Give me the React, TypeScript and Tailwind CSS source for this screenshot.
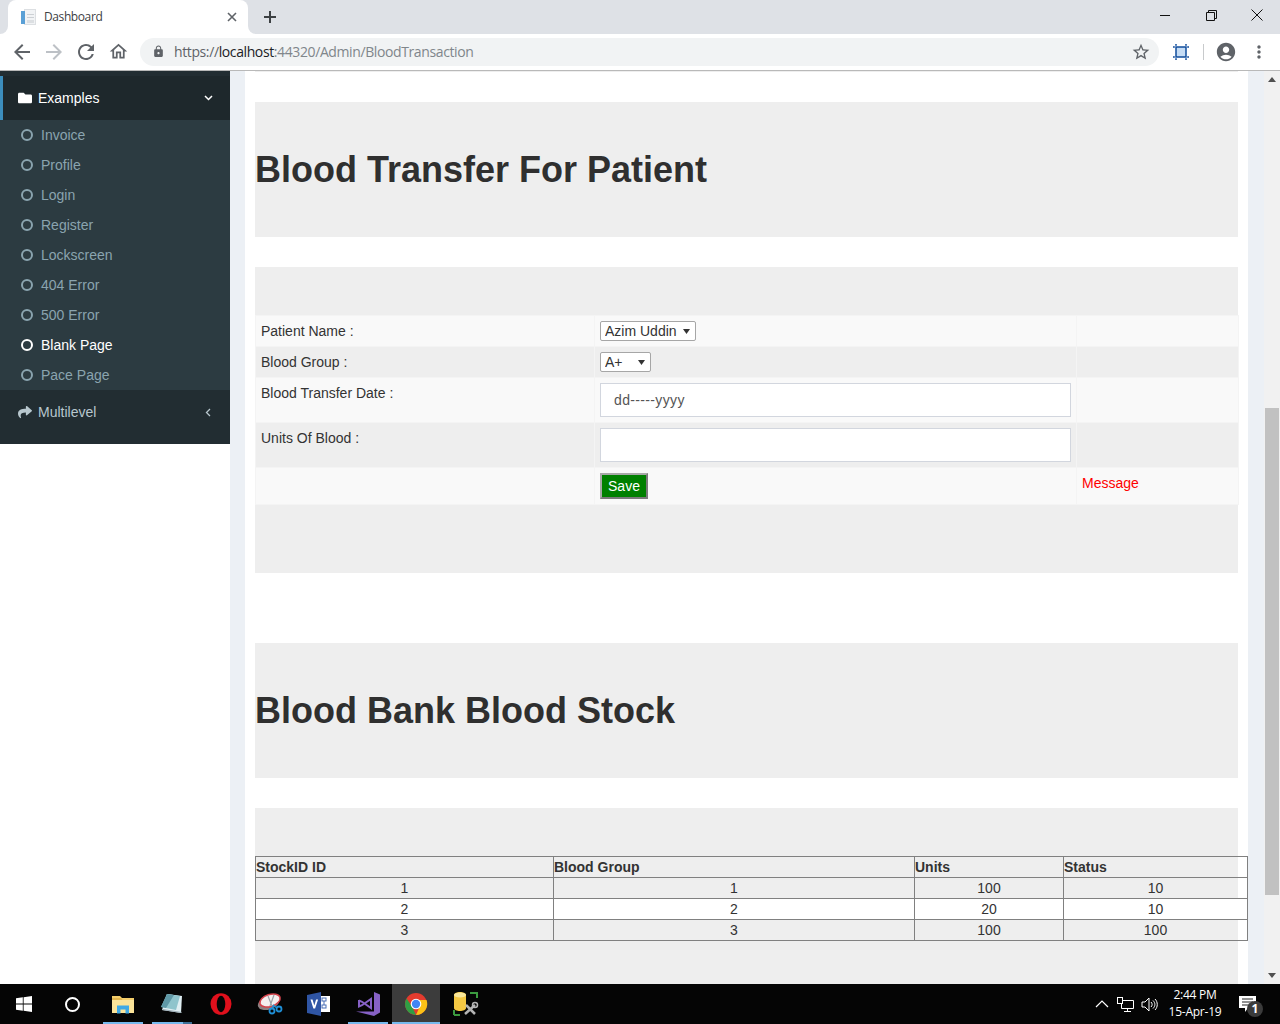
import React from "react";
import { FaFolder, FaShare } from "react-icons/fa";
import { MdArrowBack, MdArrowForward, MdRefresh, MdOutlineHome, MdLock, MdStarBorder, MdAccountCircle, MdMoreVert } from "react-icons/md";

const items = ["Invoice", "Profile", "Login", "Register", "Lockscreen", "404 Error", "500 Error", "Blank Page", "Pace Page"];

function TabIcon() {
  return (
    <svg width="16" height="18" viewBox="0 0 16 18">
      <rect x="4.500" y="1.500" width="11" height="15" fill="#f1f3f5" stroke="#dcdfe2" />
      <rect x="1" y="3" width="4" height="13" fill="#5aa0d6" />
      <rect x="7" y="6" width="7" height="1" fill="#ccd0d4" />
      <rect x="7" y="9" width="7" height="1" fill="#ccd0d4" />
      <rect x="7" y="12" width="7" height="3" fill="#dcdfe2" />
    </svg>
  );
}

function Explorer() {
  return (
    <svg width="22" height="19" viewBox="0 0 22 19">
      <path d="M0 1h8l2 2h12v15H0z" fill="#f5cf6c" />
      <rect x="0" y="5" width="22" height="13" fill="#fbe49a" />
      <path d="M0 3h9l1.500 2H0z" fill="#e3b64f" />
      <path d="M5 18.500v-8h12v8h-3.500v-4h-5v4z" fill="#3fa9e6" />
    </svg>
  );
}
function Notepad() {
  return (
    <svg width="24" height="22" viewBox="0 0 24 22">
      <path d="M7 1l15 2-1 17-19-3z" fill="#dfeef2" />
      <path d="M7 1l13 2-4 14-15-3z" fill="#8fc4cc" />
      <path d="M7 1l7 1-8 13-5-1z" fill="#5f98a6" />
      <path d="M2 17l19 3 1-1-19-3z" fill="#9fb0b8" />
    </svg>
  );
}
function Opera() {
  return (
    <svg width="22" height="22" viewBox="0 0 22 22">
      <ellipse cx="11" cy="11" rx="10.500" ry="10.800" fill="#e0101c" />
      <ellipse cx="11" cy="11" rx="4.300" ry="8.300" fill="#050505" />
    </svg>
  );
}
function Snip() {
  return (
    <svg width="26" height="24" viewBox="0 0 26 24">
      <ellipse cx="11.500" cy="11" rx="11" ry="6.500" transform="rotate(-18 11.500 11)" fill="#8c7f7f" />
      <ellipse cx="13" cy="8.500" rx="10.500" ry="6" transform="rotate(-18 13 8.500)" fill="#f5eeee" stroke="#d4414a" strokeWidth="1.500" />
      <path d="M11 4l4 10M17 3l-4 11" stroke="#9aa0a6" strokeWidth="1.200" />
      <circle cx="15" cy="19" r="2.500" fill="none" stroke="#1f8fd6" strokeWidth="1.800" />
      <circle cx="22" cy="17" r="2.500" fill="none" stroke="#1f8fd6" strokeWidth="1.800" />
      <path d="M15 16.500l1.500-3 2.500 2" stroke="#1f8fd6" strokeWidth="1.500" fill="none" />
    </svg>
  );
}
function Visio() {
  return (
    <svg width="24" height="24" viewBox="0 0 24 24">
      <rect x="12" y="4" width="11" height="16" fill="#fff" />
      <rect x="15" y="6" width="4" height="3" fill="none" stroke="#4a6fb5" />
      <rect x="15" y="13" width="4" height="3" fill="none" stroke="#4a6fb5" />
      <path d="M17 9v4" stroke="#4a6fb5" />
      <path d="M0 3l14-3v24L0 21z" fill="#2f55a4" />
      <path d="M3.500 7.500h2l1.800 6 1.800-6h2l-3 9h-1.700z" fill="#fff" />
    </svg>
  );
}
function VS() {
  return (
    <svg width="26" height="26" viewBox="0 0 26 26">
      <path d="M19 1l6 2.500v18L19 25 1 20.500h18z" fill="#8661c5" />
      <path d="M4 9v6.500l3-1.300 9-6.200v9l-9-6.200-3-1.300" fill="none" stroke="#8661c5" strokeWidth="2" />
    </svg>
  );
}
function Chrome() {
  return (
    <svg width="24" height="24" viewBox="0 0 24 24">
      <circle cx="12" cy="12" r="11" fill="#e33b2e" />
      <path d="M12 23A11 11 0 0 1 2.500 6.500L8 14.500z" fill="#2f9e44" />
      <path d="M12 23A11 11 0 0 0 22.500 8H12l3.500 7z" fill="#fbc116" />
      <circle cx="12" cy="12" r="5.300" fill="#fff" />
      <circle cx="12" cy="12" r="4.200" fill="#4285f4" />
    </svg>
  );
}
function DbTool() {
  return (
    <svg width="26" height="26" viewBox="0 0 26 26">
      <path d="M1 4c0-4 12-4 12 0v13c0 4-12 4-12 0z" fill="#f5c842" />
      <ellipse cx="7" cy="4" rx="6" ry="2.500" fill="#fbe79a" />
      <path d="M17 2h7v5M1 24v-5M1 24h6" fill="none" stroke="#3b9a3f" strokeWidth="2" />
      <path d="M12 23l10-9M13 14l9 9" stroke="#b4b4b4" strokeWidth="2.500" />
      <circle cx="22" cy="14" r="2.500" fill="none" stroke="#b4b4b4" strokeWidth="1.500" />
    </svg>
  );
}

function TaskItem({ children, line, active, split }: { children: React.ReactNode; line?: boolean; active?: boolean; split?: boolean }) {
  return (
    <div className={`relative flex h-full items-center justify-center ${active ? "w-[48px] mr-[1px] bg-[#3c3c3c]" : "w-[49px]"}`}>
      {children}
      {line && (
        <div className={`absolute bottom-0 flex h-[2px] ${active ? "left-0 right-0" : "left-[5px] w-[40px]"} bg-[#76b9ed]`}>
          {split && <div className="ml-auto h-full w-[9px] bg-[#3d6f96]" />}
        </div>
      )}
    </div>
  );
}

function Select({ label, wide }: { label: string; wide?: boolean }) {
  return (
    <div className={`relative ${wide ? "w-[96px]" : "w-[51px]"}`}>
      <select className="block h-[20px] w-full appearance-none rounded-[2px] border border-[#a6a6a6] bg-white pl-[4px] text-[14px] leading-[18px] text-[#333]">
        <option>{label}</option>
      </select>
      <svg className="absolute right-[6px] top-[8px]" width="7" height="5" viewBox="0 0 7 5"><path d="M0 0h7L3.500 5z" fill="#333" /></svg>
    </div>
  );
}

const cell = "border border-[#f4f4f4]";
const inputCls = "block h-[34px] w-[471px] border border-[#d2d6de] bg-white px-[13px] text-[14px] text-[#555]";
const sc = "border border-[#808080]";

export default function App() {
  return (
    <div className="flex h-screen w-[1280px] flex-col overflow-hidden bg-white font-['Liberation_Sans',sans-serif] text-[14px] leading-[20px] text-[#333]">
      {/* tab strip */}
      <div className="flex h-[34px] shrink-0 bg-white">
        <div className="w-2 rounded-br-lg bg-[#dee1e6]" />
        <div className="w-[240px] bg-[#dee1e6]">
          <div className="flex h-full items-center rounded-t-lg bg-white pl-[12px] pr-[11px] pb-[1px]">
            <TabIcon />
            <span className="ml-[8px] font-['Open_Sans',sans-serif] text-[12px] tracking-[-0.4px] text-[#3c4043]">Dashboard</span>
            <svg className="ml-auto" width="10" height="10" viewBox="0 0 10 10"><path d="M1 1l8 8M9 1l-8 8" stroke="#5f6368" strokeWidth="1.600" /></svg>
          </div>
        </div>
        <div className="flex flex-1 items-center rounded-bl-lg bg-[#dee1e6] pl-[16px]">
          <svg width="12" height="12" viewBox="0 0 12 12"><path d="M6 0v12M0 6h12" stroke="#3c4043" strokeWidth="2" /></svg>
          <div className="ml-auto flex h-full items-center pb-[4px]">
            <div className="flex w-[46px] justify-center"><svg width="11" height="11" viewBox="0 0 11 11"><path d="M0 5.500h10" stroke="#111" /></svg></div>
            <div className="flex w-[46px] justify-center"><svg width="11" height="11" viewBox="0 0 11 11"><path d="M.5 2.500h8v8h-8zM2.500 2.500v-2h8v8h-2" fill="none" stroke="#111" /></svg></div>
            <div className="flex w-[46px] justify-center"><svg width="12" height="12" viewBox="0 0 12 12"><path d="M.5.500l11 11M11.500.500l-11 11" stroke="#111" /></svg></div>
          </div>
        </div>
      </div>
      {/* toolbar */}
      <div className="flex h-[37px] shrink-0 items-center border-b border-[#b9b9b9] bg-white pl-[10px] pb-[1px]">
        <MdArrowBack size={24} className="text-[#5f6368]" />
        <MdArrowForward size={24} className="ml-[8px] text-[#bdc1c6]" />
        <MdRefresh size={24} className="ml-[8px] text-[#5f6368]" />
        <div className="ml-[8px] flex w-[24px] justify-center">
          <MdOutlineHome size={21} className="text-[#5f6368]" />
        </div>
        <div className="ml-[10px] flex h-[28px] w-[1019px] items-center rounded-full bg-[#f1f3f4] pl-[12px] pr-[8px]">
          <MdLock size={13} className="text-[#5f6368]" />
          <span className="ml-[9px] font-['Open_Sans',sans-serif] text-[14px] tracking-[-0.39px] text-[#80868b]">
            <span className="text-[#5f6368]">https://</span>
            <span className="text-[#202124]">localhost</span>:44320/Admin/BloodTransaction
          </span>
          <MdStarBorder size={20} className="ml-auto text-[#5f6368]" />
        </div>
        <div className="ml-[14px] flex h-[16px] w-[16px] items-center justify-center">
          <svg width="16" height="16" viewBox="0 0 16 16">
            <rect x="3" y="3" width="10" height="10" fill="#c5dcf5" />
            <path d="M0 3h16M0 13h16M3 0v16M13 0v16" stroke="#0f4c9c" strokeWidth="1.500" />
            <path d="M1.500 3h1M13.500 3h1M1.500 13h1M13.500 13h1M3 1.500v1M13 1.500v1M3 13.500v1M13 13.500v1" stroke="#fff" strokeWidth="1.500" opacity="0.6" />
          </svg>
        </div>
        <div className="ml-[14px] h-[16px] w-px bg-[#c8cacc]" />
        <MdAccountCircle size={22} className="ml-[11px] text-[#5f6368]" />
        <MdMoreVert size={20} className="ml-[12px] text-[#5f6368]" />
      </div>
      {/* page */}
      <div className="flex min-h-0 flex-1">
        <aside className="w-[230px] shrink-0 bg-white">
          <div className="bg-[#222d32] pt-[5px] pb-[10px]">
            <div className="flex h-[44px] items-center border-l-[3px] border-[#3c8dbc] bg-[#1e282c] pl-[15px] pr-[17px] text-white">
              <FaFolder size={14} />
              <span className="ml-[6px]">Examples</span>
              <svg className="ml-auto" width="9" height="6" viewBox="0 0 9 6"><path d="M1 1l3.500 3.500L8 1" fill="none" stroke="#fff" strokeWidth="1.500" /></svg>
            </div>
            <div className="bg-[#2c3b41]">
              {items.map((t) => (
                <div key={t} className={`flex h-[30px] items-center pl-[21px] ${t === "Blank Page" ? "text-white" : "text-[#8aa4af]"}`}>
                  <div className="h-[12px] w-[12px] rounded-full border-2 border-current" />
                  <span className="ml-[8px]">{t}</span>
                </div>
              ))}
            </div>
            <div className="flex h-[44px] items-center pl-[18px] pr-[19px] text-[#b8c7ce]">
              <FaShare size={14} />
              <span className="ml-[6px]">Multilevel</span>
              <svg className="ml-auto" width="6" height="9" viewBox="0 0 6 9"><path d="M5 1L1.500 4.500 5 8" fill="none" stroke="#b8c7ce" strokeWidth="1.300" /></svg>
            </div>
          </div>
        </aside>
        <main className="flex min-w-0 flex-1 overflow-hidden bg-[#ecf0f5] pl-[15px] pr-[16px]">
          <div className="w-[1003px] shrink-0 bg-white px-[10px]">
            <div className="h-px bg-[#eeeeee]" />
            <section className="mt-[30px] flex h-[135px] items-center bg-[#eeeeee]">
              <h1 className="text-[36px] leading-[40px] font-bold text-[#2f2f2f]">Blood Transfer For Patient</h1>
            </section>
            <section className="mt-[30px] bg-[#eeeeee] pt-[48px] pb-[68px]">
              <table className="w-[983px] table-fixed border-collapse">
                <colgroup>
                  <col className="w-[339px]" />
                  <col className="w-[482px]" />
                  <col className="w-[162px]" />
                </colgroup>
                <tbody>
                  <tr className="h-[31px] bg-[#f9f9f9]">
                    <td className={`${cell} px-[5px] align-middle`}>Patient Name :</td>
                    <td className={`${cell} px-[5px] align-middle`}><Select label="Azim Uddin" wide /></td>
                    <td className={cell} />
                  </tr>
                  <tr className="h-[31px] bg-[#eeeeee]">
                    <td className={`${cell} px-[5px] align-middle`}>Blood Group :</td>
                    <td className={`${cell} px-[5px] align-middle`}><Select label="A+" /></td>
                    <td className={cell} />
                  </tr>
                  <tr className="h-[45px] bg-[#f9f9f9]">
                    <td className={`${cell} px-[5px] pt-[5px] align-top`}>Blood Transfer Date :</td>
                    <td className={`${cell} px-[5px] align-middle`}>
                      <input readOnly defaultValue="dd-----yyyy" className={`${inputCls} tracking-[0.35px]`} />
                    </td>
                    <td className={cell} />
                  </tr>
                  <tr className="h-[45px] bg-[#eeeeee]">
                    <td className={`${cell} px-[5px] pt-[5px] align-top`}>Units Of Blood :</td>
                    <td className={`${cell} px-[5px] align-middle`}>
                      <input readOnly className={inputCls} />
                    </td>
                    <td className={cell} />
                  </tr>
                  <tr className="h-[37px] bg-[#f9f9f9]">
                    <td className={cell} />
                    <td className={`${cell} px-[5px] align-middle`}>
                      <button className="block h-[26px] w-[48px] border-2 border-t-[#a8a8a8] border-l-[#a8a8a8] border-r-[#7a7a7a] border-b-[#7a7a7a] bg-[#008000] text-[14px] text-white">Save</button>
                    </td>
                    <td className={`${cell} px-[5px] pb-[6px] align-middle text-[#ff0000]`}>Message</td>
                  </tr>
                </tbody>
              </table>
            </section>
            <section className="mt-[70px] flex h-[135px] items-center bg-[#eeeeee]">
              <h1 className="text-[36px] leading-[40px] font-bold text-[#2f2f2f]">Blood Bank Blood Stock</h1>
            </section>
            <section className="mt-[30px] h-[260px] bg-[#eeeeee] pt-[48px]">
              <table className="w-[992px] table-fixed border-collapse border border-[#808080]">
                <colgroup>
                  <col className="w-[298px]" />
                  <col className="w-[361px]" />
                  <col className="w-[149px]" />
                  <col className="w-[184px]" />
                </colgroup>
                <thead>
                  <tr className="h-[21px] font-bold">
                    <th className={`${sc} text-left font-bold`}>StockID ID</th>
                    <th className={`${sc} text-left font-bold`}>Blood Group</th>
                    <th className={`${sc} text-left font-bold`}>Units</th>
                    <th className={`${sc} text-left font-bold`}>Status</th>
                  </tr>
                </thead>
                <tbody className="text-center">
                  <tr className="h-[21px]"><td className={sc}>1</td><td className={sc}>1</td><td className={sc}>100</td><td className={sc}>10</td></tr>
                  <tr className="h-[21px] bg-white"><td className={sc}>2</td><td className={sc}>2</td><td className={sc}>20</td><td className={sc}>10</td></tr>
                  <tr className="h-[21px]"><td className={sc}>3</td><td className={sc}>3</td><td className={sc}>100</td><td className={sc}>100</td></tr>
                </tbody>
              </table>
            </section>
          </div>
        </main>
        <div className="flex w-[16px] shrink-0 flex-col bg-[#f1f1f1]">
          <div className="flex h-[17px] items-center justify-center">
            <svg width="8" height="5" viewBox="0 0 8 5"><path d="M4 0l4 5H0z" fill="#505050" /></svg>
          </div>
          <div className="h-[320px]" />
          <div className="mx-px h-[487px] bg-[#c1c1c1]" />
          <div className="flex-1" />
          <div className="flex h-[17px] items-center justify-center">
            <svg width="8" height="5" viewBox="0 0 8 5"><path d="M4 5l4-5H0z" fill="#505050" /></svg>
          </div>
        </div>
      </div>
      {/* taskbar */}
      <div className="flex h-[40px] shrink-0 items-center bg-[#050505] font-['Open_Sans',sans-serif] text-white">
        <div className="flex h-full w-[48px] items-center justify-center">
          <svg width="16" height="16" viewBox="0 0 16 16"><path d="M0 2.300l6.800-1v6.300H0zM7.600 1.200L16 0v7.600H7.600zM0 8.400h6.800v6.300L0 13.700zM7.600 8.400H16V16l-8.400-1.200z" fill="#fff" /></svg>
        </div>
        <div className="flex h-full w-[48px] items-center justify-center">
          <div className="h-[15px] w-[15px] rounded-full border-2 border-white" />
        </div>
        <div className="flex h-full pl-[2px]">
          <TaskItem line><Explorer /></TaskItem>
          <TaskItem line split><Notepad /></TaskItem>
          <TaskItem><Opera /></TaskItem>
          <TaskItem><Snip /></TaskItem>
          <TaskItem><Visio /></TaskItem>
          <TaskItem line><VS /></TaskItem>
          <TaskItem line active><Chrome /></TaskItem>
          <TaskItem><DbTool /></TaskItem>
        </div>
        <div className="ml-auto flex h-full items-center">
          <svg width="14" height="8" viewBox="0 0 14 8"><path d="M1 7l6-6 6 6" fill="none" stroke="#fff" strokeWidth="1.200" /></svg>
          <svg className="ml-[8px]" width="17" height="15" viewBox="0 0 17 15"><path d="M4.500 3.500h12v8h-12zM10.500 11.500v3M7 14.500h7" fill="none" stroke="#fff" /><rect x="0.500" y="0.500" width="5" height="6" fill="#050505" stroke="#fff" /></svg>
          <svg className="ml-[7px]" width="17" height="15" viewBox="0 0 17 15"><path d="M1 5h3l4-4v13l-4-4H1zM10 5c1.500 1.500 1.500 3.500 0 5M12 3.500c2.500 2.500 2.500 5.500 0 8M14 2c3 3 3 8 0 11" fill="none" stroke="#fff" /></svg>
          <div className="ml-[1px] flex w-[72px] flex-col items-center pb-[2px] text-[12px] leading-[17px] tracking-[-0.25px]">
            <span>2:44 PM</span>
            <span>15-Apr-19</span>
          </div>
          <div className="relative ml-[8px] mr-[24px] h-[16px] w-[17px]">
            <svg width="17" height="16" viewBox="0 0 17 16"><path d="M0 0h17v12h-8l-3 4v-4H0z" fill="#fff" /><path d="M3 3h11M3 6h11M3 9h7" stroke="#222" /></svg>
            <div className="absolute left-[8px] top-[5px] flex h-[16px] w-[16px] items-center justify-center rounded-full bg-[#3b3b3b] text-[12px] font-bold leading-none">1</div>
          </div>
        </div>
      </div>
    </div>
  );
}
